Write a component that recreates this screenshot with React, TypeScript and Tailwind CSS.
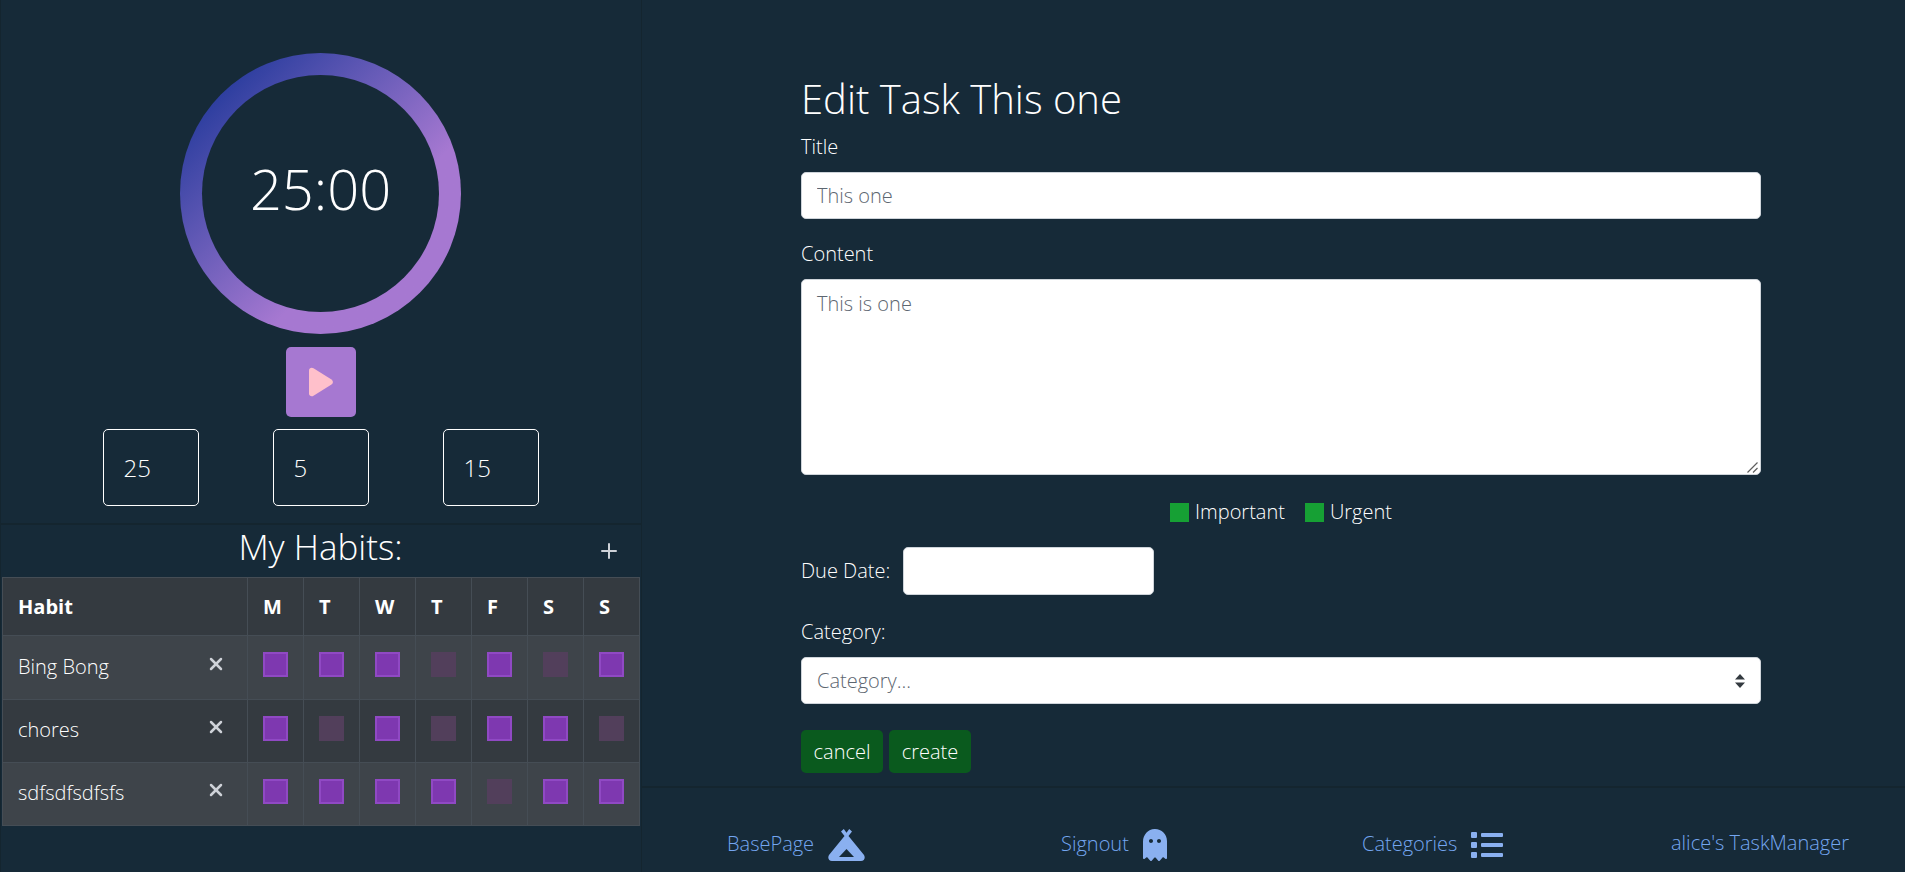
import { Plus, X } from "lucide-react";
import { FaGhost, FaList } from "react-icons/fa";

const days = ["M", "T", "W", "T", "F", "S", "S"];

const habits = [
  { name: "Bing Bong", checks: [1, 1, 1, 0, 1, 0, 1] },
  { name: "chores", checks: [1, 0, 1, 0, 1, 1, 0] },
  { name: "sdfsdfsdfsfs", checks: [1, 1, 1, 1, 0, 1, 1] },
];

function Tent() {
  return (
    <svg width="37" height="32" viewBox="0 0 37 32" className="text-[#8ab0f0]">
      <path
        fill="currentColor"
        fillRule="evenodd"
        d="M13 2.500 15.800 0l2.700 3.800L21.200 0 24 2.500l-3.500 4.500L36 26c1.600 3 .4 6-3 6H4c-3.400 0-4.600-3-3-6L16.500 7ZM11 28h15l-7.500-8Z"
      />
    </svg>
  );
}

function NavLink({ label, children }: { label: string; children?: React.ReactNode }) {
  return (
    <a className="flex items-center gap-[14px] text-[#74a6f0]">
      <span className="mb-[2px]">{label}</span>
      {children}
    </a>
  );
}

export default function App() {
  return (
    <div
      className="flex h-[872px] w-full overflow-hidden bg-[#162a38] text-[20px] font-light text-white"
      style={{ fontFamily: '"Open Sans", sans-serif' }}
    >
      {/* timer + habits */}
      <aside className="w-[642px] shrink-0 border-r border-[#14252f] shadow-[inset_1px_0_0_#14252f]">
        <div className="pt-[53px]">
          <div className="mx-auto flex h-[281px] w-[281px] items-center justify-center rounded-full bg-linear-to-br from-[#2f3fa0] from-15% to-[#a678d1] to-65%">
            <div className="flex h-[237px] w-[237px] items-center justify-center rounded-full bg-[#162a38] pb-[12px]">
              <span className="text-[56px] leading-none">25:00</span>
            </div>
          </div>
          <button className="mx-auto mt-[13px] flex h-[70px] w-[70px] items-center justify-center rounded-[5px] bg-[#a678d1]">
            <svg width="26" height="30" viewBox="0 0 26 30">
              <path
                fill="#ffc0cb"
                d="M1 3.500C1 1 3.500 0 5.500 1.200l18 11.200c1.900 1.200 1.900 3.900 0 5.100l-18 11.300C3.500 30 1 29 1 26.500Z"
              />
            </svg>
          </button>
          <div className="mt-[12px] flex justify-center gap-[74px]">
            {["25", "5", "15"].map((v) => (
              <input
                key={v}
                defaultValue={v}
                className="h-[77px] w-[96px] rounded-[5px] border border-white bg-transparent pl-[20px] text-[24px] text-white outline-none"
              />
            ))}
          </div>
        </div>

        <div className="mt-[17px] border-t-2 border-[#14252f]">
          <div className="grid h-[52px] grid-cols-[1fr_auto_1fr] items-center">
            <span />
            <h2 className="pb-[10px] text-[35px] leading-none">My Habits:</h2>
            <button className="justify-self-end pr-[20px] text-[#ced2d8]">
              <Plus size={24} strokeWidth={2} />
            </button>
          </div>
          <table className="ml-[2px] w-[638px] table-fixed border-collapse bg-[#343a40]">
            <thead>
              <tr className="h-[58px]">
                <th className="w-[245px] border border-[#454d55] pl-[15px] text-left font-bold">Habit</th>
                {days.map((d, i) => (
                  <th key={i} className="border border-[#454d55] pl-[15px] text-left font-bold">
                    {d}
                  </th>
                ))}
              </tr>
            </thead>
            <tbody>
              {habits.map((h, r) => (
                <tr key={h.name} className={r === 0 ? "h-[64px] bg-[#3e444a]" : r === 2 ? "h-[63px] bg-[#3e444a]" : "h-[63px]"}>
                  <td className="border border-[#454d55] pb-[2px] pl-[15px] pr-[21px]">
                    <div className="flex items-center justify-between">
                      <span>{h.name}</span>
                      <X size={20} strokeWidth={3} className="mb-[6px] text-[#ced2d8]" />
                    </div>
                  </td>
                  {h.checks.map((c, i) => (
                    <td key={i} className="border border-[#454d55] pl-[15px] align-top pt-[16px]">
                      <div
                        className={
                          c
                            ? "h-[25px] w-[25px] border-2 border-[#9049c4] bg-[#7e38b0]"
                            : "h-[25px] w-[25px] bg-[#523f5b]"
                        }
                      />
                    </td>
                  ))}
                </tr>
              ))}
            </tbody>
          </table>
        </div>
      </aside>

      {/* edit form + nav */}
      <main className="flex min-w-0 flex-1 flex-col">
        <form className="ml-[159px] h-[786px] w-[960px] pt-[72px]">
          <h1 className="text-[40px] leading-[54px]">Edit Task This one</h1>
          <label className="mt-[9px] block leading-[24px]">Title</label>
          <input
            placeholder="This one"
            className="mt-[13px] block h-[47px] w-full rounded-[5px] border border-[#ced4da] bg-white px-[15px] text-[#495057] outline-none placeholder:text-[#5d6670]"
          />
          <label className="mt-[23px] block leading-[24px]">Content</label>
          <div className="relative mt-[13px]">
            <textarea
              placeholder="This is one"
              className="block h-[196px] w-full resize-none rounded-[5px] border border-[#ced4da] bg-white px-[15px] py-[9px] text-[#495057] outline-none placeholder:text-[#5d6670]"
            />
            <svg
              width="11"
              height="11"
              viewBox="0 0 11 11"
              className="pointer-events-none absolute bottom-[2px] right-[3px] text-[#5f5f5f]"
            >
              <path stroke="currentColor" strokeWidth="1.200" d="M10.500.5l-10 10M10.500 6l-4.500 4.500" />
            </svg>
          </div>

          <div className="mt-[22px] flex justify-center gap-[20px]">
            <label className="flex items-center gap-[6px]">
              <span className="h-[19px] w-[19px] bg-[#16a034]" />
              Important
            </label>
            <label className="flex items-center gap-[6px]">
              <span className="h-[19px] w-[19px] bg-[#16a034]" />
              Urgent
            </label>
          </div>

          <div className="mt-[20px] flex items-center gap-[13px]">
            <label>Due Date:</label>
            <input className="h-[48px] w-[251px] rounded-[5px] border border-[#ced4da] bg-white outline-none" />
          </div>

          <label className="mt-[25px] block leading-[24px]">Category:</label>
          <div className="relative mt-[13px]">
            <select className="block h-[47px] w-full appearance-none rounded-[5px] border border-[#ced4da] bg-white px-[15px] text-[#5d6670] outline-none">
              <option>Category...</option>
            </select>
            <svg
              width="10"
              height="14"
              viewBox="0 0 10 14"
              className="pointer-events-none absolute right-[16px] top-[17px] text-[#343a40]"
            >
              <path fill="currentColor" d="M5 0 10 5.500H0ZM5 14 0 8.500H10Z" />
            </svg>
          </div>

          <div className="mt-[26px] flex gap-[6px]">
            <button type="button" className="h-[43px] w-[82px] rounded-[5px] bg-[#0a5a1e] text-white">
              cancel
            </button>
            <button type="button" className="h-[43px] w-[82px] rounded-[5px] bg-[#0a5a1e] text-white">
              create
            </button>
          </div>
        </form>

        <nav className="flex h-[86px] items-start border-t-2 border-[#14252f] pl-[85px] pt-[41px] leading-[28px]">
          <div className="w-[334px]">
            <NavLink label="BasePage">
              <Tent />
            </NavLink>
          </div>
          <div className="w-[301px]">
            <NavLink label="Signout">
              <FaGhost className="h-[32px] w-[24px] text-[#8ab0f0]" />
            </NavLink>
          </div>
          <div className="w-[309px]">
            <NavLink label="Categories">
              <FaList size={32} className="text-[#8ab0f0]" />
            </NavLink>
          </div>
          <NavLink label="alice's TaskManager" />
        </nav>
      </main>
    </div>
  );
}
